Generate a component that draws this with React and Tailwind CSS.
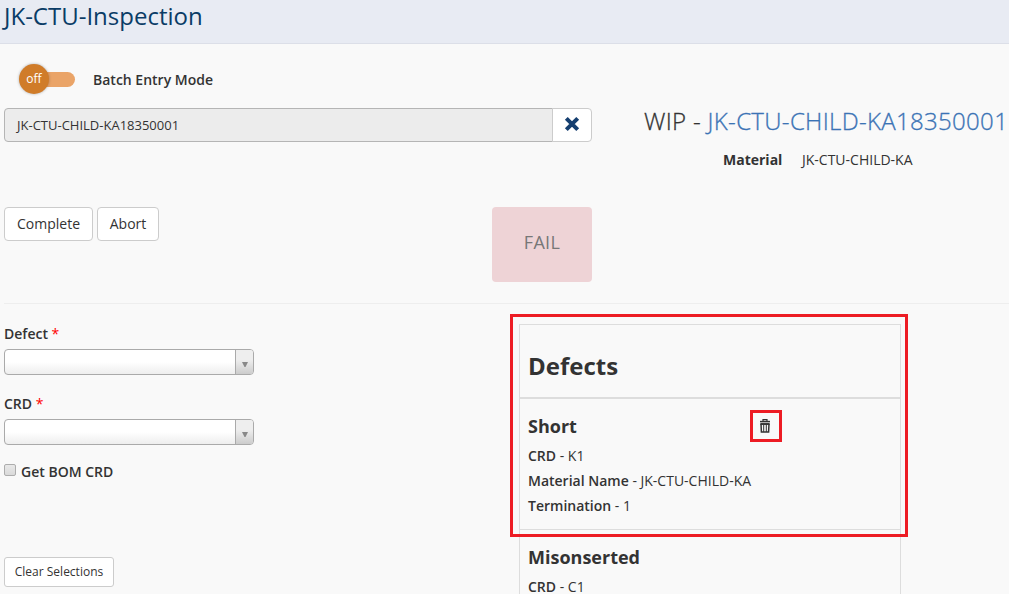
import React from "react";

function SelectBox() {
  return (
    <div className="flex h-[26px] w-[250px] overflow-hidden rounded-[4px] border border-[#aaa] bg-[linear-gradient(to_top,#eee_0%,#fff_50%)]">
      <div className="flex-1" />
      <div className="flex w-[18px] items-center justify-center border-l border-[#aaa] bg-[linear-gradient(to_top,#ccc_0%,#eee_60%)] pt-1">
        <svg width="6" height="5" viewBox="0 0 6 5">
          <path d="M0 0h6L3.5 5h-1z" fill="#888" />
        </svg>
      </div>
    </div>
  );
}

function TrashIcon() {
  return (
    <svg className="mr-0.5" width="12" height="14" viewBox="0 0 12 14" fill="none" stroke="#333">
      <path d="M4 2.2V.7h4v1.5" strokeWidth="1.2" />
      <path d="M1 2.6h10" strokeWidth="1.5" />
      <path d="M1.4 5h9.2" strokeWidth="1.9" />
      <path d="M2 4.8l.4 8.2h7.2l.4-8.2" strokeWidth="1.5" />
      <path d="M4.7 5v8M7.3 5v8" strokeWidth="1" />
    </svg>
  );
}

function Detail({ label, value }) {
  return (
    <div className="h-[25px] whitespace-nowrap text-[14px] leading-[25px]">
      <span className="font-semibold">{label}</span>
      <span> - {value}</span>
    </div>
  );
}

export default function App() {
  return (
    <div className="relative flex h-[594px] w-[1009px] flex-col overflow-hidden bg-[#f9f9f9] font-['Open_Sans','Noto_Sans',sans-serif] text-[14px] leading-5 text-[#333]">
      <header className="h-11 shrink-0 border-b border-[#dcdfe8] bg-[#e8ebf3] pl-1">
        <h1 className="whitespace-nowrap text-[24px] leading-[31px] text-[#0a3c66]">JK-CTU-Inspection</h1>
      </header>

      <section className="ml-1 flex h-[260px] shrink-0 border-b border-[#eee]">
        <div className="w-[588px]">
          <div className="flex h-16 items-start pl-[15px] pt-5">
            <div className="flex h-[30px] w-14 items-center">
              <div className="z-10 flex size-[30px] shrink-0 items-center justify-center rounded-full bg-[#d07c29] text-[12px] text-white shadow-[0_0_3px_rgba(0,0,0,0.3)]">
                off
              </div>
              <div className="-ml-2 h-[15px] w-[34px] rounded-r-full bg-[#eaa468]" />
            </div>
            <span className="ml-[18px] mt-1.5 whitespace-nowrap font-semibold">Batch Entry Mode</span>
          </div>
          <div className="flex h-[34px]">
            <div className="flex w-[549px] items-center rounded-l-[4px] border border-[#b5b5b5] bg-[#ececec] pl-3 text-[13px]">
              JK-CTU-CHILD-KA18350001
            </div>
            <button className="-ml-px flex w-10 items-center justify-center rounded-r-[4px] border border-[#ccc] bg-white pb-0.5">
              <svg width="16" height="16" viewBox="0 0 16 16">
                <path d="M2.3 2.3l11.4 11.4M13.7 2.3L2.3 13.7" stroke="#153f70" strokeWidth="4" />
              </svg>
            </button>
          </div>
          <div className="mt-[65px] flex items-start">
            <button className="h-[34px] w-[89px] rounded-[4px] border border-[#ccc] bg-white text-[14px]">Complete</button>
            <button className="ml-1 h-[34px] w-[62px] rounded-[4px] border border-[#ccc] bg-white text-[14px]">Abort</button>
            <div className="ml-auto flex h-[75px] w-[100px] items-center justify-center rounded-[4px] bg-[#eed3d6] pb-1.5 text-[18px] tracking-[0.3px] text-[#777]">
              FAIL
            </div>
          </div>
        </div>
        <div className="flex-1 pt-[60px]">
          <h2 className="ml-[52px] whitespace-nowrap text-[24px] font-light leading-[33px] tracking-[0.32px] [-webkit-text-stroke:0.3px]">
            WIP - <span className="text-[#3b73b5]">JK-CTU-CHILD-KA18350001</span>
          </h2>
          <div className="ml-[131px] mt-[13px] flex whitespace-nowrap">
            <span className="w-[79px] font-bold">Material</span>
            <span>JK-CTU-CHILD-KA</span>
          </div>
        </div>
      </section>

      <section className="flex min-h-0 flex-1 pl-1">
        <div className="w-[515px] pt-5">
          <div className="h-[25px] font-semibold">Defect <span className="font-normal text-[#f00]">*</span></div>
          <SelectBox />
          <div className="mt-[19px] h-[25px] font-semibold">CRD <span className="font-normal text-[#f00]">*</span></div>
          <SelectBox />
          <label className="mt-[17px] flex items-start font-semibold">
            <span className="mr-[5px] mt-0.5 size-3 rounded-[2px] border border-[#adadad] bg-[linear-gradient(#e9e9e9,#dadada)]" />
            Get BOM CRD
          </label>
          <button className="mt-[75px] block h-[30px] w-[110px] whitespace-nowrap rounded-[3px] border border-[#ccc] bg-white text-[12px]">
            Clear Selections
          </button>
        </div>
        <div className="mt-5 w-[382px] border border-b-0 border-[#ddd]">
          <h3 className="h-[74px] border-b-2 border-[#ddd] pl-2 pt-[25px] text-[24px] font-bold leading-[32px]">Defects</h3>
          <div className="h-[131px] border-b border-[#ddd] pl-2 pt-[15px]">
            <h4 className="h-[29px] text-[18px] font-bold leading-6">Short</h4>
            <Detail label="CRD" value="K1" />
            <Detail label="Material Name" value="JK-CTU-CHILD-KA" />
            <Detail label="Termination" value="1" />
          </div>
          <div className="pl-2 pt-[15px]">
            <h4 className="h-[29px] text-[18px] font-bold leading-6">Misonserted</h4>
            <Detail label="CRD" value="C1" />
          </div>
        </div>
      </section>

      <div className="absolute left-[510px] top-[314px] h-[223px] w-[398px] border-[3px] border-[#ed1c24]" />
      <button className="absolute left-[750px] top-[410px] flex h-8 w-8 items-center justify-center border-[3px] border-[#ed1c24]">
        <TrashIcon />
      </button>
    </div>
  );
}
